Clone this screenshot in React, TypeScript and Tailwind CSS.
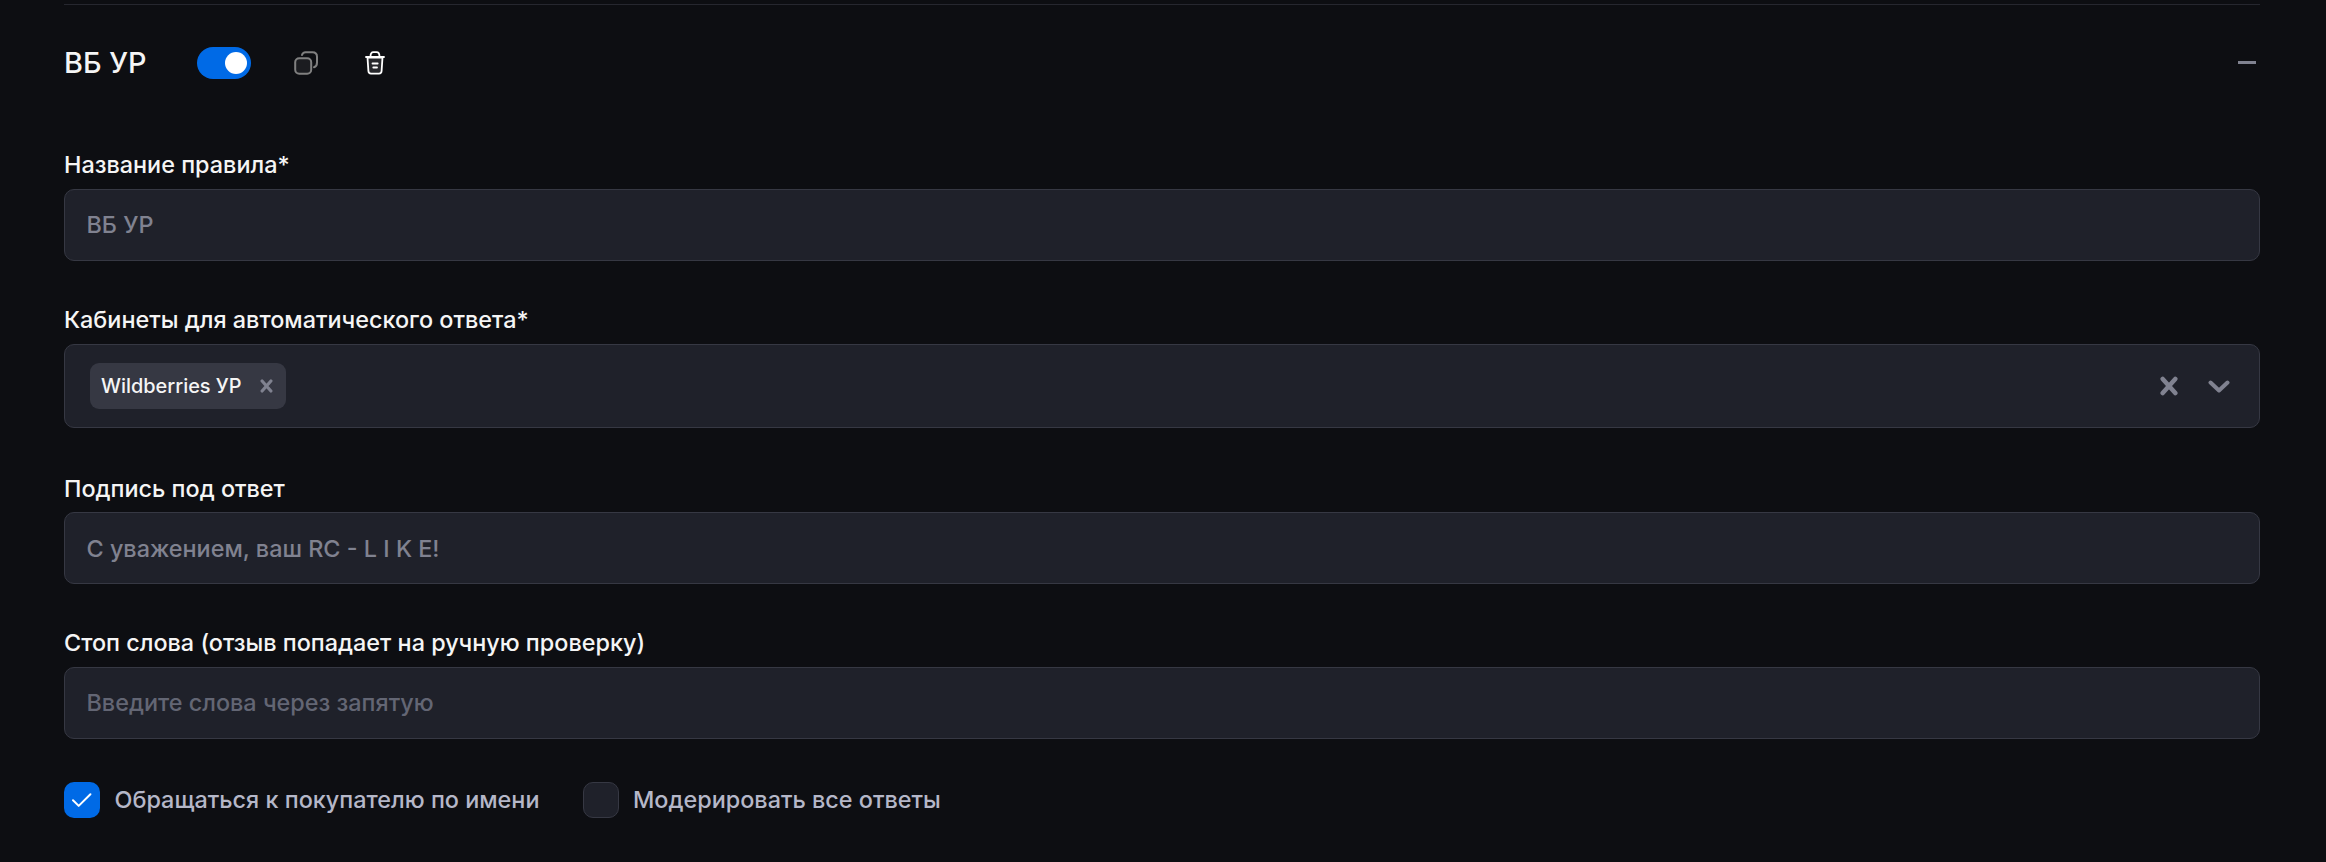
import { useState, type ReactNode } from "react";

interface FieldProps {
  label: string;
  className?: string;
  labelClassName?: string;
  children: ReactNode;
}

interface CheckOptionProps {
  label: string;
  checked: boolean;
  onToggle: () => void;
}

const inputClass =
  "block h-[72px] w-full rounded-[10px] border border-[#363843] bg-[#1f212a] px-[21.5px] text-[23.4px] font-medium text-[#808290] outline-none placeholder:text-[#636674]";

function Field({ label, className, labelClassName = "mb-1.5", children }: FieldProps) {
  return (
    <div className={className}>
      <div className={labelClassName}>
        <div className="text-[23.4px] leading-9 font-medium text-[#f5f5f5]">{label}</div>
      </div>
      {children}
    </div>
  );
}

function CopyIcon() {
  return (
    <svg className="h-6 w-6" viewBox="0 0 24 24" fill="none" stroke="#808080" strokeWidth="2" strokeLinecap="round">
      <rect x="1.2" y="7.2" width="16" height="15.6" rx="4" fill="#1b1c20" />
      <path d="M8 4C8.5 2.2 9.700 1.200 11.500 1.200H18.500C21.300 1.200 23 2.900 23 5.700V11.500C23 14 22 15.700 20 16.300" />
    </svg>
  );
}

function TrashIcon() {
  return (
    <svg className="h-6 w-5" viewBox="0 0 20 24" fill="none" stroke="#fff" strokeWidth="1.8" strokeLinecap="round" strokeLinejoin="round">
      <path d="M2.500 6.500L3.400 20C3.500 21.700 4.500 22.600 6 22.600H14C15.500 22.600 16.500 21.700 16.600 20L17.500 6.500Z" fill="#26272b" />
      <path d="M1 6H19M5.500 5.500C5.500 2.500 6.500 1.200 8.500 1.200H11.500C13.500 1.200 14.500 2.500 14.500 5.500" />
      <path d="M7.500 12.500H12.700M8.300 16.500H12" />
    </svg>
  );
}

function CrossIcon({ className }: { className: string }) {
  return (
    <svg className={className} viewBox="0 0 18 20" fill="none" stroke="#808290" strokeWidth="4.5" strokeLinecap="round">
      <path d="M2.700 2.900L15.300 17.100M15.300 2.900L2.700 17.100" />
    </svg>
  );
}

function CheckOption({ label, checked, onToggle }: CheckOptionProps) {
  return (
    <button type="button" role="checkbox" aria-checked={checked} onClick={onToggle} className="flex items-center gap-[14.5px]">
      <span
        className={
          checked
            ? "flex h-9 w-9 items-center justify-center rounded-[10px] bg-[#006ae6]"
            : "flex h-9 w-9 items-center justify-center rounded-[10px] border border-[#363843] bg-[#1f212a]"
        }
      >
        {checked && (
          <svg className="h-[15px] w-5" viewBox="0 0 20 15" fill="none" stroke="#fff" strokeWidth="2" strokeLinecap="round" strokeLinejoin="round">
            <path d="M1 7.200L6.700 12.900L18.400 1.200" />
          </svg>
        )}
      </span>
      <span className="text-[23.4px] leading-9 font-medium text-[#b5b7c8]">{label}</span>
    </button>
  );
}

export default function App() {
  const [enabled, setEnabled] = useState(true);
  const [byName, setByName] = useState(true);
  const [moderate, setModerate] = useState(false);

  return (
    <main className="h-[862px] bg-[#0d0e12] pt-1 pr-[66px] pl-16 font-[Inter,sans-serif]">
      <header className="flex h-[117px] items-start border-t border-[#26272f] pt-[42px]">
        <div className="flex h-8 flex-1 items-center">
          <h2 className="w-[133px] text-[28.8px] leading-8 font-medium text-[#f5f5f5]">ВБ УР</h2>
          <button
            type="button"
            role="switch"
            aria-checked={enabled}
            onClick={() => setEnabled(!enabled)}
            className={enabled ? "flex h-8 w-[54px] items-center justify-end rounded-full bg-[#006ae6] px-1" : "flex h-8 w-[54px] items-center rounded-full bg-[#363843] px-1"}
          >
            <span className="h-[22px] w-[22px] rounded-full bg-white" />
          </button>
          <button type="button" aria-label="Копировать" className="ml-[43px]">
            <CopyIcon />
          </button>
          <button type="button" aria-label="Удалить" className="ml-[47px]">
            <TrashIcon />
          </button>
          <button type="button" aria-label="Свернуть" className="mr-1 mb-px ml-auto h-[3px] w-[18px] bg-[#808290]" />
        </div>
      </header>

      <Field label="Название правила*" className="mt-[26px]">
        <input className={`${inputClass} pb-px`} defaultValue="ВБ УР" />
      </Field>

      <Field label="Кабинеты для автоматического ответа*" className="mt-[41px]">
        <div className="flex h-[84px] items-center rounded-[10px] border border-[#363843] bg-[#1f212a] pr-[29px] pl-[25px]">
          <div className="flex h-[46px] w-[196px] items-center justify-between rounded-[9px] bg-[#363843] pr-[13px] pl-[11px]">
            <span className="pt-0.5 text-[19.9px] font-medium text-[#f5f5f5]">Wildberries УР</span>
            <button type="button" aria-label="Убрать">
              <CrossIcon className="h-[14px] w-[13px]" />
            </button>
          </div>
          <button type="button" aria-label="Очистить" className="ml-auto">
            <CrossIcon className="h-5 w-[18px]" />
          </button>
          <button type="button" aria-label="Открыть" className="ml-[30px]">
            <svg className="h-[13px] w-[22px]" viewBox="0 0 22 13" fill="none" stroke="#808290" strokeWidth="4" strokeLinecap="round" strokeLinejoin="round">
              <path d="M2.500 2.500L11 10.500L19.500 2.500" />
            </svg>
          </button>
        </div>
      </Field>

      <Field label="Подпись под ответ" className="mt-[43px]" labelClassName="mb-[5px]">
        <input className={inputClass} defaultValue="С уважением, ваш RC - L I K E!" />
      </Field>

      <Field label="Стоп слова (отзыв попадает на ручную проверку)" className="mt-[41px]">
        <input className={`${inputClass} pb-px`} placeholder="Введите слова через запятую" />
      </Field>

      <div className="mt-[43px] flex gap-[43px]">
        <CheckOption label="Обращаться к покупателю по имени" checked={byName} onToggle={() => setByName(!byName)} />
        <CheckOption label="Модерировать все ответы" checked={moderate} onToggle={() => setModerate(!moderate)} />
      </div>
    </main>
  );
}
